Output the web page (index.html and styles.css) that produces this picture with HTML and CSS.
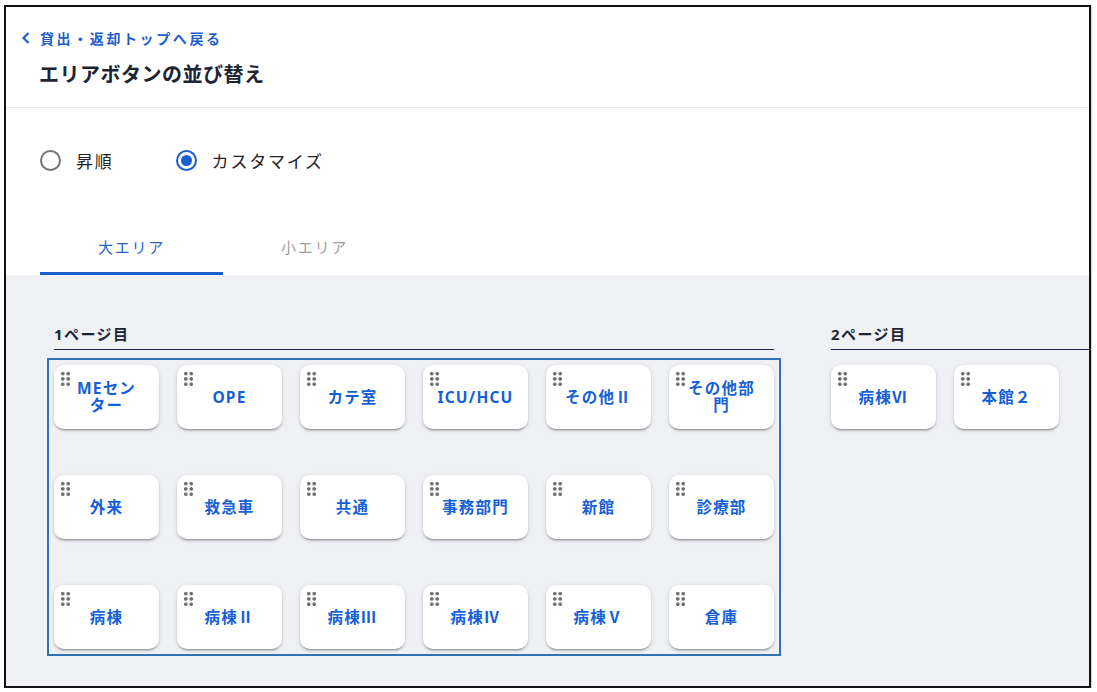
FILE: index.html
```html
<!DOCTYPE html>
<html lang="ja">
<head>
    <meta charset="UTF-8">
    <meta name="viewport" content="width=device-width, initial-scale=1.0">
    <title>エリアボタンの並び替え</title>
    <link rel="stylesheet" href="styles.css">
</head>
<body>
    <div class="frame">
        <header class="page-head">
            <a class="back-link" href="#">
                <svg class="chevron" width="8" height="12" viewBox="0 0 8 12"><polyline points="6.5,1 1.5,6 6.5,11" fill="none" stroke="currentColor" stroke-width="2.2"/></svg>
                貸出・返却トップへ戻る
            </a>
            <h1 class="page-title">エリアボタンの並び替え</h1>
        </header>

        <div class="sort-mode">
            <label class="radio"><span class="radio-mark"></span>昇順</label>
            <label class="radio is-checked"><span class="radio-mark"></span>カスタマイズ</label>
        </div>

        <div class="tabs">
            <div class="tab is-active">大エリア</div>
            <div class="tab">小エリア</div>
        </div>

        <main class="board">
            <section class="page-col">
                <h2 class="page-label">1ページ目</h2>
                <div class="card-grid is-target">
                    <div class="area-card"><span class="grip"></span><span class="area-name">MEセンター</span></div>
                    <div class="area-card"><span class="grip"></span><span class="area-name">OPE</span></div>
                    <div class="area-card"><span class="grip"></span><span class="area-name">カテ室</span></div>
                    <div class="area-card"><span class="grip"></span><span class="area-name nowrap">ICU/HCU</span></div>
                    <div class="area-card"><span class="grip"></span><span class="area-name">その他Ⅱ</span></div>
                    <div class="area-card"><span class="grip"></span><span class="area-name">その他部門</span></div>
                    <div class="area-card"><span class="grip"></span><span class="area-name">外来</span></div>
                    <div class="area-card"><span class="grip"></span><span class="area-name">救急車</span></div>
                    <div class="area-card"><span class="grip"></span><span class="area-name">共通</span></div>
                    <div class="area-card"><span class="grip"></span><span class="area-name">事務部門</span></div>
                    <div class="area-card"><span class="grip"></span><span class="area-name">新館</span></div>
                    <div class="area-card"><span class="grip"></span><span class="area-name">診療部</span></div>
                    <div class="area-card"><span class="grip"></span><span class="area-name">病棟</span></div>
                    <div class="area-card"><span class="grip"></span><span class="area-name">病棟Ⅱ</span></div>
                    <div class="area-card"><span class="grip"></span><span class="area-name">病棟Ⅲ</span></div>
                    <div class="area-card"><span class="grip"></span><span class="area-name">病棟Ⅳ</span></div>
                    <div class="area-card"><span class="grip"></span><span class="area-name">病棟Ⅴ</span></div>
                    <div class="area-card"><span class="grip"></span><span class="area-name">倉庫</span></div>
                </div>
            </section>
            <section class="page-col">
                <h2 class="page-label">2ページ目</h2>
                <div class="card-grid">
                    <div class="area-card"><span class="grip"></span><span class="area-name">病棟Ⅵ</span></div>
                    <div class="area-card"><span class="grip"></span><span class="area-name">本館２</span></div>
                </div>
            </section>
        </main>
    </div>
</body>
</html>
```

FILE: styles.css
```css
body {
    margin: 0;
    background: #fff;
    font-family: "Noto Sans", "Noto Sans CJK JP", sans-serif;
    color: #1d2433;
}
.frame {
    box-sizing: border-box;
    width: 1087px;
    height: 683px;
    margin: 5px 0 0 4px;
    border: 2px solid #111;
    box-shadow: 1px 1px 0 #d4d4d4;
    display: flex;
    flex-direction: column;
    overflow: hidden;
}
.page-head {
    padding: 21px 0 18px 0;
    border-bottom: 1px solid #e9e9e9;
}
.back-link {
    display: flex;
    align-items: center;
    gap: 10px;
    padding-left: 16px;
    height: 20px;
    font-size: 14px;
    font-weight: bold;
    letter-spacing: 2.6px;
    color: #1b5fcc;
    text-decoration: none;
}
.page-title {
    margin: 13px 0 0 0;
    padding-left: 33px;
    font-size: 20px;
    line-height: 28px;
    letter-spacing: 0.5px;
    font-weight: bold;
    color: #1d2433;
}
.sort-mode {
    display: flex;
    align-items: center;
    padding: 40px 0 0 34px;
    height: 24px;
}
.radio {
    display: flex;
    align-items: center;
    gap: 15px;
    margin-right: 62px;
    font-size: 17px;
    letter-spacing: 1.8px;
    color: #222;
}
.radio-mark {
    box-sizing: border-box;
    width: 21px;
    height: 21px;
    border: 2px solid #757575;
    border-radius: 50%;
    display: flex;
    align-items: center;
    justify-content: center;
}
.radio.is-checked .radio-mark {
    border-color: #1b5fcc;
}
.radio.is-checked .radio-mark::after {
    content: "";
    width: 11px;
    height: 11px;
    border-radius: 50%;
    background: #1b5fcc;
}
.tabs {
    display: flex;
    margin-top: 55px;
    padding-left: 34px;
}
.tab {
    box-sizing: border-box;
    width: 183px;
    height: 48px;
    padding-bottom: 7px;
    border-bottom: 3px solid transparent;
    display: flex;
    align-items: center;
    justify-content: center;
    font-size: 15px;
    font-weight: normal;
    letter-spacing: 1.8px;
    color: #9e9e9e;
}
.tab.is-active {
    color: #2a63c8;
    border-bottom-color: #1b5fcc;
}
.board {
    flex: 1;
    background: #eff1f5;
    display: flex;
    gap: 57px;
    padding: 49px 0 0 48px;
}
.page-col {
    flex: none;
    width: 720px;
}
.page-label {
    margin: 0;
    padding-bottom: 5px;
    border-bottom: 1px solid #1c2a48;
    font-size: 15px;
    line-height: 20px;
    letter-spacing: 1.4px;
    font-weight: bold;
    color: #1d2433;
}
.card-grid {
    margin-top: 15px;
    display: grid;
    grid-template-columns: repeat(6, 105px);
    grid-auto-rows: 64px;
    column-gap: 18px;
    row-gap: 46px;
}
.card-grid.is-target {
    outline: 2px solid #2f72b8;
    outline-offset: 5px;
}
.area-card {
    position: relative;
    background: #fff;
    border-radius: 10px;
    box-shadow: 0 3px 1px -2px rgba(0,0,0,.2), 0 2px 2px 0 rgba(0,0,0,.14), 0 1px 5px 0 rgba(0,0,0,.12);
    display: flex;
    align-items: center;
    justify-content: center;
    padding: 0 18px;
}
.area-name {
    text-align: center;
    font-size: 15.5px;
    line-height: 17px;
    letter-spacing: 1.2px;
    font-weight: bold;
    color: #1460d8;
}
.area-name.nowrap {
    white-space: nowrap;
}
.grip {
    position: absolute;
    top: 6px;
    left: 6px;
    width: 11px;
    height: 16px;
    background: radial-gradient(circle, #6e6e6e 1.6px, transparent 2px) 0 0 / 5.5px 5.3px;
}
```
